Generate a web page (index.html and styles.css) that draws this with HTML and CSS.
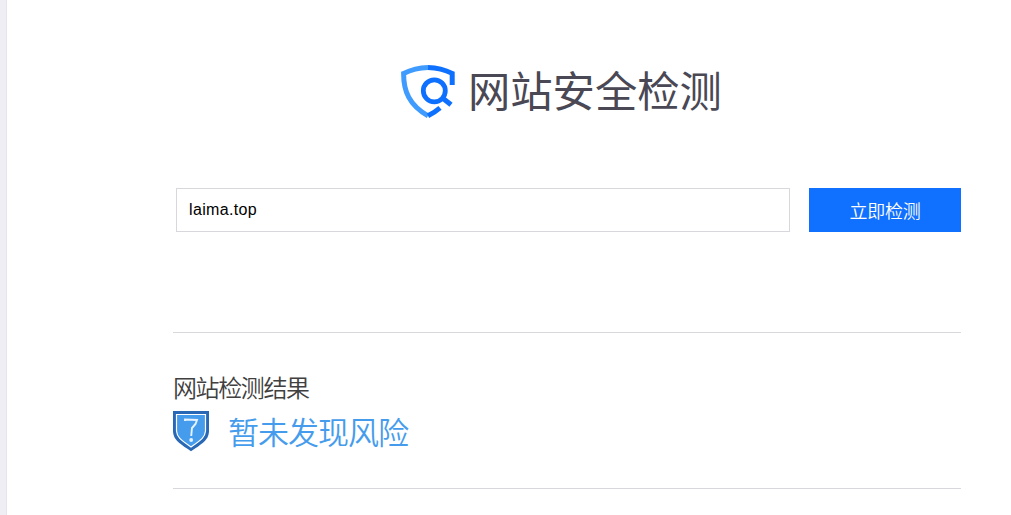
FILE: index.html
```
<!DOCTYPE html>
<html lang="zh-CN">
<head>
    <meta charset="UTF-8">
    <meta name="viewport" content="width=device-width, initial-scale=1.0">
    <title>网站安全检测</title>
    <link rel="stylesheet" href="styles.css">
</head>
<body>
    <div class="container">
        <div class="header">
            <svg class="logo" width="56" height="56" viewBox="0 0 56 56" fill="none">
                <path d="M28 3.4C20 3.6 11 5.7 3.6 9.4C3.6 27 9 41 28 51.8" stroke="#409bff" stroke-width="5"/>
                <path d="M28 3.4C36.5 3.6 45 5.7 52.2 9.4V21" stroke="#0e70ff" stroke-width="5"/>
                <path d="M28 51.8Q34.5 48.5 40 43.8" stroke="#0e70ff" stroke-width="5"/>
                <circle cx="34.3" cy="26.8" r="11" stroke="#0e70ff" stroke-width="4.8"/>
                <path d="M42.5 34L51 40.8" stroke="#0e70ff" stroke-width="5"/>
            </svg>
            <h1>网站安全检测</h1>
        </div>

        <form class="search" id="checkForm">
            <input type="text" id="domain" value="laima.top">
            <button type="submit">立即检测</button>
        </form>

        <div class="result-section">
            <h2>网站检测结果</h2>
            <div class="result-item">
                <svg class="shield" width="36" height="41" viewBox="0 0 36 41" fill="none">
                    <path d="M0 0H36V20C35.5 28 32 31 18 40.3C4 31 0.5 28 0 20Z" fill="#2868b4"/>
                    <path d="M3.5 3.5H32.5V20C32 26 29 28.5 18 36C7 28.5 4 26 3.5 20Z" fill="#469cec" stroke="#fff" stroke-width="1.2"/>
                    <path d="M12 10V8.5L24 9L22.5 13L19 17L18.2 25" stroke="#e6f2ff" stroke-width="1.9"/>
                    <circle cx="18.2" cy="29" r="1.9" fill="#e6f2ff"/>
                </svg>
                <span>暂未发现风险</span>
            </div>
        </div>
    </div>

    <script>
        document.getElementById('checkForm').addEventListener('submit', function(e) {
            e.preventDefault();
        });
    </script>
</body>
</html>
```
FILE: styles.css
```
* {
    box-sizing: border-box;
}
body {
    margin: 0;
    height: 515px;
    overflow: hidden;
    border-left: 6px solid #efeef4;
    background-color: #fff;
    font-family: "Noto Sans CJK SC", sans-serif;
    box-shadow: inset 1px 0 #e6e5ee;
}
.container {
    width: 788px;
    margin-left: 167px;
    padding-top: 64px;
}
.header {
    display: flex;
    height: 56px;
    padding-left: 227px;
}
.logo {
    margin-right: 12px;
}
h1 {
    margin: 0;
    color: #494854;
    font-size: 42.3px;
    font-weight: 400;
    line-height: 50px;
    white-space: nowrap;
}
.search {
    display: flex;
    justify-content: space-between;
    margin-top: 68px;
    padding-left: 3px;
}
.search input {
    width: 614px;
    height: 44px;
    padding: 0 12px;
    border: 1px solid #d8d8dc;
    color: #000;
    font-family: "Liberation Sans", Arial, sans-serif;
    font-size: 16px;
    letter-spacing: 0.35px;
}
.search button {
    width: 152px;
    height: 44px;
    padding: 0;
    border: none;
    background-color: #1070ff;
    color: white;
    font-family: "Noto Sans CJK SC", sans-serif;
    font-size: 18px;
    font-weight: 350;
    letter-spacing: -0.3px;
    cursor: pointer;
}
.result-section {
    height: 157px;
    margin-top: 100px;
    padding-top: 37px;
    border-top: 1px solid #d8d8dc;
    border-bottom: 1px solid #d8d8dc;
}
h2 {
    margin: 0;
    color: #404040;
    font-size: 24px;
    font-weight: 350;
    letter-spacing: -1.4px;
    line-height: 34px;
}
.result-item {
    display: flex;
    margin-top: 7px;
    color: #469cec;
    font-size: 31px;
    font-weight: 350;
    letter-spacing: -1px;
    line-height: 40px;
}
.shield {
    margin-right: 19px;
}
```
